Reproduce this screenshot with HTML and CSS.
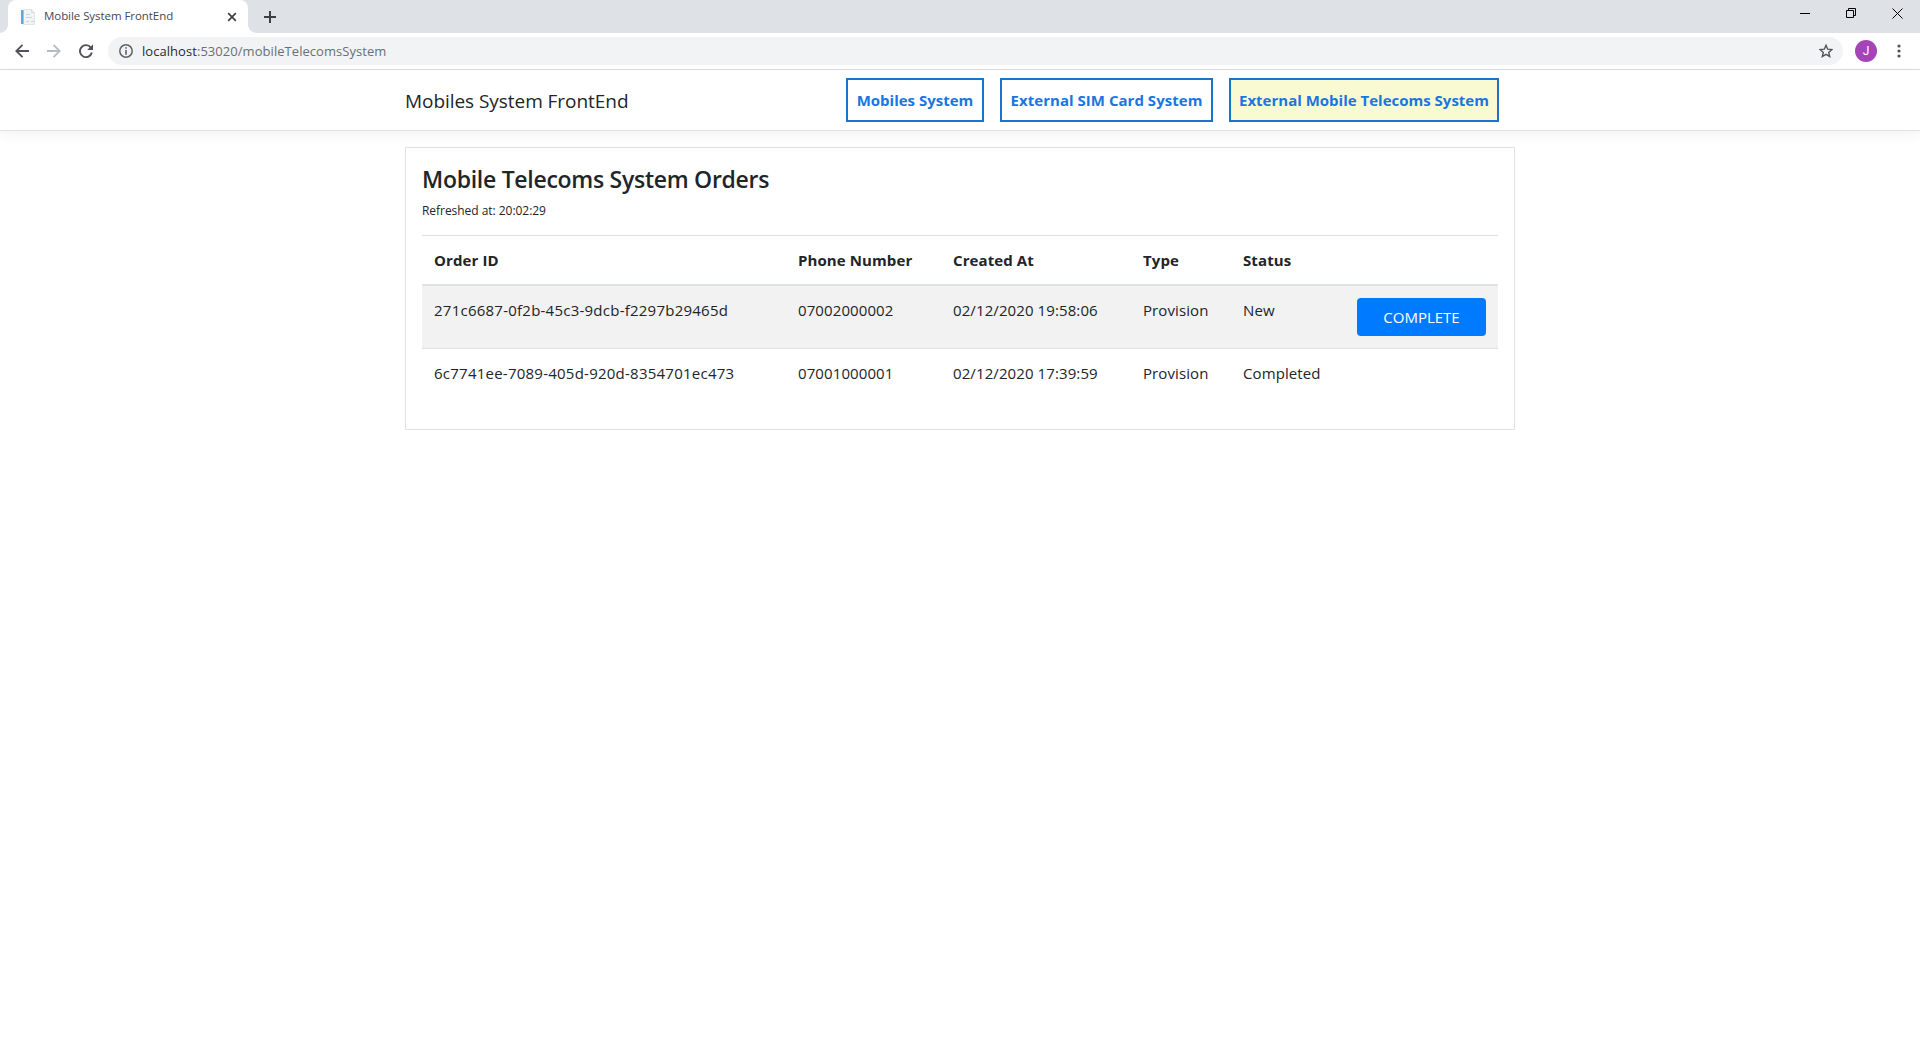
FILE: index.html
```html
<!DOCTYPE html>
<html lang="en">
<head>
<meta charset="utf-8">
<title>Mobile System FrontEnd</title>
<link rel="stylesheet" href="styles.css">
</head>
<body>
<div class="tab-strip">
  <div class="tab">
    <svg class="favicon" width="16" height="16" viewBox="0 0 16 16"><path d="M3.500.5h8l3 3v12h-11z" fill="#f1f3f5" stroke="#e0e4e7"/><path d="M6 5.500h4M6 8.500h6M6 12.500h3M11 12.500h3" stroke="#cbd5dc"/><path d="M11.500.5v3h3" fill="none" stroke="#d5dadd"/><path d="M1 1h2.500v14H1z" fill="#61a9d4"/></svg>
    <span class="tab-title">Mobile System FrontEnd</span>
    <svg class="tab-close" width="10" height="10" viewBox="0 0 10 10"><path d="M1.200 1.200l7.600 7.600M8.800 1.200L1.200 8.800" stroke="#3c4043" stroke-width="1.700"/></svg>
  </div>
  <svg class="new-tab" width="12" height="12" viewBox="0 0 12 12"><path d="M6 0v12M0 6h12" stroke="#3c4043" stroke-width="2"/></svg>
  <div class="window-controls">
    <svg width="10" height="10" viewBox="0 0 10 10"><path d="M0 5.500h10" stroke="#000"/></svg>
    <svg width="10" height="10" viewBox="0 0 10 10"><path d="M.5 2.500h7v7h-7zM2.500 2.500v-2h7v7h-2" fill="none" stroke="#000"/></svg>
    <svg width="11" height="11" viewBox="0 0 11 11"><path d="M.5.5l10 10M10.500.5l-10 10" stroke="#000"/></svg>
  </div>
</div>
<div class="toolbar">
  <svg width="14" height="14" viewBox="0 0 14 14"><path d="M14 7H1.500M7.500 .8L1.300 7l6.200 6.200" fill="none" stroke="#505357" stroke-width="1.900"/></svg>
  <svg width="14" height="14" viewBox="0 0 14 14"><path d="M0 7h12.500M6.500 .8L12.700 7l-6.200 6.200" fill="none" stroke="#b9bcbf" stroke-width="1.900"/></svg>
  <svg width="14" height="14" viewBox="0 0 14 14"><path d="M11.800 3.600A6 6 0 1 0 12.800 8.600" fill="none" stroke="#505357" stroke-width="1.900"/><path d="M14 .2V6H8.200z" fill="#505357"/></svg>
  <div class="address">
    <svg width="14" height="14" viewBox="0 0 14 14"><circle cx="7" cy="7" r="6.200" fill="none" stroke="#5f6368" stroke-width="1.500"/><path d="M7 3.200v1.600M7 6v4.800" stroke="#5f6368" stroke-width="1.600"/></svg>
    <span class="url"><span class="host">localhost</span>:53020/mobileTelecomsSystem</span>
    <svg class="star" width="14" height="14" viewBox="0 0 14 14"><path d="M7 1.300l1.700 3.900 4.200.4-3.200 2.800 1 4.100L7 10.300l-3.700 2.200 1-4.100L1.100 5.600l4.200-.4z" fill="none" stroke="#505357" stroke-width="1.400"/></svg>
  </div>
  <span class="avatar">J</span>
  <svg class="menu" width="4" height="14" viewBox="0 0 4 14"><g fill="#505357"><circle cx="2" cy="2" r="1.600"/><circle cx="2" cy="7" r="1.600"/><circle cx="2" cy="12" r="1.600"/></g></svg>
</div>
<header class="navbar">
  <a class="brand">Mobiles System FrontEnd</a>
  <nav class="nav-links">
    <a class="nav-link nav-mobiles">Mobiles System</a>
    <a class="nav-link nav-sim">External SIM Card System</a>
    <a class="nav-link nav-telecoms active">External Mobile Telecoms System</a>
  </nav>
</header>
<main class="card">
  <h1 class="card-title">Mobile Telecoms System Orders</h1>
  <p class="refreshed">Refreshed at: 20:02:29</p>
  <div class="orders">
    <div class="row head"><span>Order ID</span><span>Phone Number</span><span>Created At</span><span>Type</span><span>Status</span><span></span></div>
    <div class="row striped"><span class="order-id">271c6687-0f2b-45c3-9dcb-f2297b29465d</span><span>07002000002</span><span>02/12/2020 19:58:06</span><span>Provision</span><span>New</span><button class="complete">COMPLETE</button></div>
    <div class="row"><span class="order-id">6c7741ee-7089-405d-920d-8354701ec473</span><span>07001000001</span><span>02/12/2020 17:39:59</span><span>Provision</span><span>Completed</span><span></span></div>
  </div>
</main>
</body>
</html>
```
FILE: styles.css
```css
* { box-sizing: border-box; }

body {
  margin: 0;
  background: #fff;
  color: #212529;
  font: 15px/24px "Open Sans", "Noto Sans", sans-serif;
}

svg { display: block; flex: none; }

.tab-strip {
  display: flex;
  align-items: center;
  height: 33px;
  padding-left: 8px;
  background: #dee1e6;
}

.tab {
  position: relative;
  display: flex;
  align-items: center;
  width: 240px;
  height: 33px;
  padding: 0 12px;
  background: #fff;
  border-radius: 8px 8px 0 0;
}

.tab::before,
.tab::after {
  content: "";
  position: absolute;
  bottom: 0;
  width: 8px;
  height: 8px;
}

.tab::before { left: -8px; background: radial-gradient(circle at 0 0, transparent 7.5px, #fff 8px); }
.tab::after { right: -8px; background: radial-gradient(circle at 100% 0, transparent 7.5px, #fff 8px); }

.tab-title {
  margin: -2px 0 0 8px;
  color: #45494d;
  font-size: 11.5px;
  letter-spacing: -.06px;
  white-space: nowrap;
}

.tab-close { margin-left: auto; margin-right: -1px; }
.new-tab { margin-left: 16px; }

.window-controls {
  display: flex;
  gap: 36px;
  margin: -7px 17px 0 auto;
}

.toolbar {
  display: flex;
  align-items: center;
  height: 37px;
  padding-left: 15px;
  gap: 18px;
  border-bottom: 1px solid #dadce0;
}

.address {
  display: flex;
  align-items: center;
  width: 1735px;
  height: 28px;
  margin-left: -3px;
  padding: 0 10px 0 11px;
  background: #f1f3f4;
  border-radius: 14px;
}

.url {
  margin-left: 9px;
  color: #6b6f73;
  font-size: 13px;
  letter-spacing: .05px;
  white-space: nowrap;
}

.host { color: #2a2c2f; }
.star { margin-left: auto; }
.menu { margin-left: 2px; }

.avatar {
  width: 22px;
  height: 22px;
  margin-left: -6px;
  border-radius: 50%;
  background: #a544b8;
  color: #fff;
  font: 12px/22px Roboto, sans-serif;
  text-align: center;
}

.navbar {
  display: flex;
  align-items: center;
  justify-content: space-between;
  height: 61px;
  padding: 0 421px 0 405px;
  border-bottom: 1px solid #dee2e6;
  box-shadow: 0 4px 12px rgba(0, 0, 0, .05);
}

.brand {
  padding-top: 2px;
  font-size: 19px;
  line-height: 30px;
  letter-spacing: -.05px;
}

.nav-links { display: flex; gap: 16px; }

.nav-link {
  height: 44px;
  border: 2px solid #1b74cc;
  color: #1b75e0;
  font-weight: 700;
  line-height: 40px;
  text-align: center;
  white-space: nowrap;
}

.nav-mobiles { width: 138px; }
.nav-sim { width: 213px; letter-spacing: .03px; }
.nav-telecoms { width: 270px; }
.active { background: #fafad2; }

.card {
  width: 1110px;
  height: 283px;
  margin: 16px 0 0 405px;
  padding: 16px;
  background: #fff;
  border: 1px solid #dee2e6;
  position: relative;
}

.card-title {
  margin: 0;
  font-size: 23px;
  font-weight: 600;
  line-height: 30px;
  letter-spacing: -.28px;
}

.refreshed {
  margin: 7px 0 14px;
  font-size: 12px;
  line-height: 20px;
  letter-spacing: -.04px;
}

.row {
  display: grid;
  grid-template-columns: 364px 155px 190px 100px 114px 153px;
  height: 50px;
  padding: 12px 0 0 12px;
  border-top: 1px solid #dee2e6;
  letter-spacing: .1px;
}

.head { height: 51px; border-bottom: 2px solid #dee2e6; font-weight: 700; }

.striped { height: 62px; border-top: 0; background: #f2f2f2; }

.order-id { letter-spacing: .24px; }

.complete {
  width: 129px;
  height: 38px;
  padding: 0 0 1px;
  border: 0;
  border-radius: 4px;
  background: #007bff;
  color: #fff;
  font: inherit;
  line-height: 38px;
}
```
